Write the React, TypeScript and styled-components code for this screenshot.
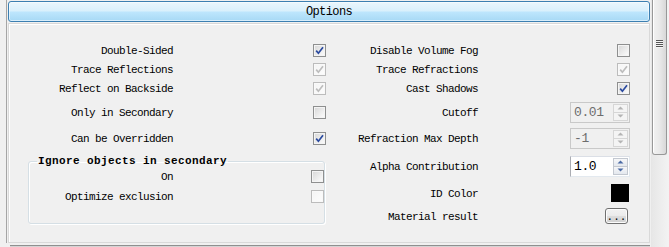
import React from 'react';
import styled, { createGlobalStyle, css } from 'styled-components';

const GlobalStyle = createGlobalStyle`
  html, body {
    margin: 0;
    padding: 0;
    background: #f0f0f0;
    overflow: hidden;
  }

  body {
    font-family: 'Liberation Mono', 'DejaVu Sans Mono', 'Noto Sans CJK SC', monospace;
    font-size: 11px;
    letter-spacing: -0.6px;
    color: #000;
  }
`;

const Window = styled.div`
  display: flex;
  width: 669px;
  height: 247px;
  padding-left: 6px;
  box-sizing: border-box;
`;

const Main = styled.div`
  display: flex;
  flex-direction: column;
  width: 645px;
  height: 243px;
  padding: 1px 1px 0;
  border-left: 1px solid #a5a5a5;
  box-sizing: border-box;
`;

const Header = styled.div`
  height: 21px;
  border: 1px solid #3c7fb1;
  border-radius: 3px;
  box-sizing: border-box;
  background: linear-gradient(#eaf6fd 0%, #d9f0fc 48%, #bee6fd 52%, #a7d9f5 100%);
  box-shadow: inset 0 0 0 1px rgba(255, 255, 255, 0.55);
  text-align: center;
  font-size: 12px;
  line-height: 20px;
`;

const Panel = styled.div`
  flex: 1;
  margin-top: 1px;
  padding: 17px 19px 0 0;
  border: 1px solid #d9d9d9;
  box-shadow: inset 1px 1px 0 #fff;
  box-sizing: border-box;
  display: grid;
  grid-template-columns: 164px 153px 152px 152px;
  grid-template-rows: 19px 19px 19px 28px 24px 32px 22px 24px;
  align-content: start;
`;

const Footer = styled.div`
  height: 0;
`;

const FooterLine = styled.div`
  margin: 2px 0 0 2px;
  height: 2px;
  border-top: 1px solid #8f8f8f;
  background: #d4d4d4;
`;

const Label = styled.div<{ $col?: number; $row?: number }>`
  grid-column: ${(p) => p.$col ?? 1};
  grid-row: ${(p) => p.$row ?? 'auto'};
  justify-self: end;
  align-self: center;
  margin-top: 1px;
  white-space: nowrap;
  line-height: 14px;
`;

const Control = styled.div<{ $col?: number; $row?: number; $inset?: number }>`
  grid-column: ${(p) => p.$col ?? 2};
  grid-row: ${(p) => p.$row ?? 'auto'};
  justify-self: end;
  align-self: center;
  display: flex;
  margin-right: ${(p) => p.$inset ?? 0}px;
`;

const Box = styled.span<{ $disabled?: boolean }>`
  display: flex;
  align-items: center;
  justify-content: center;
  width: 13px;
  height: 13px;
  box-sizing: border-box;
  border: 1px solid ${(p) => (p.$disabled ? '#bcbcbc' : '#8e8f8f')};
  background: ${(p) =>
    p.$disabled
      ? 'linear-gradient(135deg, #f4f4f4, #fdfdfd)'
      : 'linear-gradient(135deg, #d6d6d6 0%, #f2f2f2 70%, #fdfdfd 100%)'};
  box-shadow: inset 0 0 0 1px ${(p) => (p.$disabled ? '#f9f9f9' : '#f4f4f4')};
`;

function Check({ checked, disabled }: { checked?: boolean; disabled?: boolean }) {
  return (
    <Box $disabled={disabled}>
      {checked && (
        <svg width="9" height="9" viewBox="0 0 9 9">
          <path
            d="M1.2 4.6 L3.4 7.2 L8 1.2"
            fill="none"
            stroke={disabled ? '#bdbdbd' : '#2a4a9f'}
            strokeWidth="1.7"
          />
        </svg>
      )}
    </Box>
  );
}

const Spin = styled.div<{ $disabled?: boolean }>`
  display: flex;
  width: 60px;
  height: 21px;
  box-sizing: border-box;
  border: 1px solid ${(p) => (p.$disabled ? '#c9c9c9' : '#e2e3ea')};
  background: ${(p) => (p.$disabled ? '#f0f0f0' : '#fff')};
  ${(p) =>
    !p.$disabled &&
    css`
      border-color: #dbdfe6 #e3e9ef #e3e9ef #abadb3;
    `}
`;

const SpinText = styled.div<{ $disabled?: boolean }>`
  flex: 1;
  padding-left: 3px;
  font-size: 13px;
  letter-spacing: -0.4px;
  line-height: 20px;
  color: ${(p) => (p.$disabled ? '#6d6d6d' : '#000')};
`;

const SpinButtons = styled.div`
  display: flex;
  flex-direction: column;
  width: 15px;
  margin: 1px 1px 1px 0;
`;

const SpinHalf = styled.div<{ $disabled?: boolean }>`
  flex: 1;
  display: flex;
  align-items: center;
  justify-content: center;
  border: 1px solid ${(p) => (p.$disabled ? '#d6d6d6' : '#c3c8d0')};
  background: ${(p) => (p.$disabled ? '#f4f4f4' : 'linear-gradient(#f6f7f9, #e4e8ee)')};

  & + & {
    border-top: none;
  }
`;

function Arrow({ up, disabled }: { up?: boolean; disabled?: boolean }) {
  return (
    <svg width="7" height="4" viewBox="0 0 7 4">
      <path
        d={up ? 'M0.5 3.5 L3.5 0.5 L6.5 3.5 Z' : 'M0.5 0.5 L3.5 3.5 L6.5 0.5 Z'}
        fill={disabled ? '#b4b4b4' : '#4a6aa5'}
      />
    </svg>
  );
}

function SpinBox({ value, disabled }: { value: string; disabled?: boolean }) {
  return (
    <Spin $disabled={disabled}>
      <SpinText $disabled={disabled}>{value}</SpinText>
      <SpinButtons>
        <SpinHalf $disabled={disabled}>
          <Arrow up disabled={disabled} />
        </SpinHalf>
        <SpinHalf $disabled={disabled}>
          <Arrow disabled={disabled} />
        </SpinHalf>
      </SpinButtons>
    </Spin>
  );
}

const Swatch = styled.div<{ $color: string }>`
  width: 18px;
  height: 18px;
  background: ${(p) => p.$color};
`;

const DotsButton = styled.div`
  width: 23px;
  height: 16px;
  box-sizing: border-box;
  border: 1px solid #707070;
  border-radius: 3px;
  background: linear-gradient(#f2f2f2 0%, #ebebeb 48%, #dddddd 52%, #cfcfcf 100%);
  box-shadow: inset 0 0 0 1px #fcfcfc;
  font-size: 11px;
  line-height: 16px;
  letter-spacing: 0;
  text-align: center;
`;

const Group = styled.fieldset`
  grid-column: 1 / span 2;
  grid-row: 6 / span 3;
  margin: 5px 1px 4px 19px;
  padding: 0;
  min-width: 0;
  border: 1px solid #d5dfe5;
  border-radius: 3px;
  box-shadow: inset 1px 1px 0 #fff, 1px 1px 0 #fff;
`;

const Legend = styled.legend`
  margin-left: 8px;
  padding: 0 1px;
  font-weight: bold;
  letter-spacing: 0.4px;
  line-height: 12px;
  margin-bottom: 2px;
`;

const GroupGrid = styled.div`
  display: grid;
  grid-template-columns: 144px 151px;
  grid-template-rows: 14px 14px;
  row-gap: 6px;
`;

const Scrollbar = styled.div`
  width: 18px;
  height: 247px;
  border-left: 1px solid #e6e6e6;
  background: linear-gradient(90deg, #e7e7e7, #f3f3f3);
  box-sizing: border-box;
`;

const Thumb = styled.div`
  display: flex;
  justify-content: center;
  width: 15px;
  height: 155px;
  box-sizing: border-box;
  border: 1px solid #989898;
  border-top: none;
  border-radius: 0 0 3px 3px;
  background: linear-gradient(90deg, #f2f2f2 0%, #e9e9e9 50%, #d8d8d8 100%);
  box-shadow: inset 1px 0 0 #fff;
`;

const Grip = styled.div`
  margin-top: 40px;
  width: 7px;
  height: 8px;
  background: repeating-linear-gradient(#555 0 1px, #f4f4f4 1px 2px);
`;

type Item =
  | { kind: 'check'; label: string; checked?: boolean; disabled?: boolean }
  | { kind: 'spin'; label: string; value: string; disabled?: boolean }
  | { kind: 'color'; label: string; color: string }
  | { kind: 'button'; label: string };

const leftItems: Item[] = [
  { kind: 'check', label: 'Double-Sided', checked: true },
  { kind: 'check', label: 'Trace Reflections', checked: true, disabled: true },
  { kind: 'check', label: 'Reflect on Backside', checked: true, disabled: true },
  { kind: 'check', label: 'Only in Secondary' },
  { kind: 'check', label: 'Can be Overridden', checked: true },
];

const rightItems: Item[] = [
  { kind: 'check', label: 'Disable Volume Fog' },
  { kind: 'check', label: 'Trace Refractions', checked: true, disabled: true },
  { kind: 'check', label: 'Cast Shadows', checked: true },
  { kind: 'spin', label: 'Cutoff', value: '0.01', disabled: true },
  { kind: 'spin', label: 'Refraction Max Depth', value: '-1', disabled: true },
  { kind: 'spin', label: 'Alpha Contribution', value: '1.0' },
  { kind: 'color', label: 'ID Color', color: '#000' },
  { kind: 'button', label: 'Material result' },
];

function renderControl(item: Item) {
  switch (item.kind) {
    case 'check':
      return <Check checked={item.checked} disabled={item.disabled} />;
    case 'spin':
      return <SpinBox value={item.value} disabled={item.disabled} />;
    case 'color':
      return <Swatch $color={item.color} />;
    case 'button':
      return <DotsButton>...</DotsButton>;
  }
}

function insetFor(item: Item) {
  if (item.kind === 'color') return 1;
  if (item.kind === 'button') return 2;
  return 0;
}

export default function App() {
  return (
    <>
      <GlobalStyle />
      <Window>
        <Main>
          <Header>Options</Header>
          <Panel>
            {leftItems.map((item, i) => (
              <React.Fragment key={item.label}>
                <Label $col={1} $row={i + 1}>
                  {item.label}
                </Label>
                <Control $col={2} $row={i + 1}>
                  {renderControl(item)}
                </Control>
              </React.Fragment>
            ))}
            {rightItems.map((item, i) => (
              <React.Fragment key={item.label}>
                <Label $col={3} $row={i + 1}>
                  {item.label}
                </Label>
                <Control $col={4} $row={i + 1} $inset={insetFor(item)}>
                  {renderControl(item)}
                </Control>
              </React.Fragment>
            ))}
            <Group>
              <Legend>Ignore objects in secondary</Legend>
              <GroupGrid>
                <Label $col={1}>On</Label>
                <Control $col={2}>
                  <Check />
                </Control>
                <Label $col={1}>Optimize exclusion</Label>
                <Control $col={2}>
                  <Check disabled />
                </Control>
              </GroupGrid>
            </Group>
          </Panel>
          <Footer>
            <FooterLine />
          </Footer>
        </Main>
        <Scrollbar>
          <Thumb>
            <Grip />
          </Thumb>
        </Scrollbar>
      </Window>
    </>
  );
}
